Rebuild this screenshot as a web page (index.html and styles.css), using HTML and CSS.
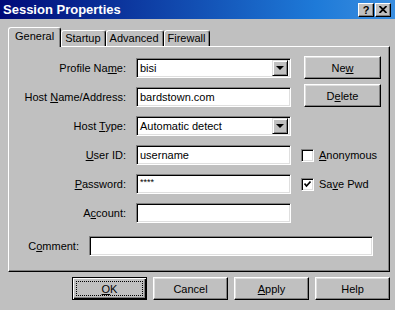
FILE: index.html
```html
<!DOCTYPE html>
<html lang="en">
<head>
  <meta charset="UTF-8" />
  <title>Session Properties</title>
  <link rel="stylesheet" href="styles.css">
</head>
<body>
  <div class="window">
    <div class="titlebar">
      <span class="title">Session Properties</span>
      <div class="caption-btns">
        <span class="cap-btn">?</span>
        <span class="cap-btn">
          <svg width="8" height="7" viewBox="0 0 8 7"><path d="M0.5 0 L7.5 7 M7.5 0 L0.5 7" stroke="#000" stroke-width="1.8"/></svg>
        </span>
      </div>
    </div>

    <div class="tabs">
      <div class="tab active">General</div>
      <div class="tab">Startup</div>
      <div class="tab">Advanced</div>
      <div class="tab">Firewall</div>
    </div>

    <div class="panel">
      <div class="top">
        <div class="fields">
          <label>Profile Na<u>m</u>e:</label>
          <div class="field select"><span>bisi</span><span class="drop"><i></i></span></div>

          <label>Host <u>N</u>ame/Address:</label>
          <div class="field">bardstown.com</div>

          <label>Host <u>T</u>ype:</label>
          <div class="field select"><span>Automatic detect</span><span class="drop"><i></i></span></div>

          <label><u>U</u>ser ID:</label>
          <div class="field">username</div>

          <label><u>P</u>assword:</label>
          <div class="field pwd">****</div>

          <label>A<u>c</u>count:</label>
          <div class="field"></div>
        </div>

        <div class="side">
          <button class="btn side-btn">Ne<u>w</u></button>
          <button class="btn side-btn gap">D<u>e</u>lete</button>
          <div class="check first"><span class="box"></span><span><u>A</u>nonymous</span></div>
          <div class="check"><span class="box"><svg width="7" height="7" viewBox="0 0 7 7"><path d="M0.5 2.5 L2.5 5 L6.5 0.5" fill="none" stroke="#000" stroke-width="1.6"/></svg></span><span>Sa<u>v</u>e Pwd</span></div>
        </div>
      </div>

      <div class="comment-row">
        <label>C<u>o</u>mment:</label>
        <div class="field wide"></div>
      </div>
    </div>

    <div class="actions">
      <button class="btn default"><span class="focus"><u>O</u>K</span></button>
      <button class="btn">Cancel</button>
      <button class="btn"><u>A</u>pply</button>
      <button class="btn">Help</button>
    </div>
  </div>
</body>
</html>
```

FILE: styles.css
```css
body {
  margin: 0;
  font-family: 'Liberation Sans', Arial, sans-serif;
  font-size: 11px;
  color: #000;
}

.window {
  width: 395px;
  height: 310px;
  background: #c0c0c0;
  overflow: hidden;
}

.titlebar {
  height: 19px;
  display: flex;
  align-items: center;
  justify-content: space-between;
  padding: 0 4px 0 3px;
  background: linear-gradient(to right, #000a78, #1e7ad8 80%, #3a8ee0);
}

.title {
  color: #fff;
  font-weight: bold;
  font-size: 13px;
}

.caption-btns {
  display: flex;
  gap: 1px;
}

.cap-btn {
  width: 16px;
  height: 14px;
  box-sizing: border-box;
  display: flex;
  align-items: center;
  justify-content: center;
  background: #c0c0c0;
  border-top: 1px solid #fff;
  border-left: 1px solid #fff;
  border-right: 1px solid #000;
  border-bottom: 1px solid #000;
  box-shadow: inset -1px -1px #808080;
  font-weight: bold;
  font-size: 11px;
}

.tabs {
  display: flex;
  align-items: flex-end;
  height: 19px;
  margin-top: 8px;
  padding-left: 8px;
}

.tab {
  height: 16px;
  box-sizing: border-box;
  padding: 1px 4px 0 3px;
  border-top: 1px solid #fff;
  border-left: 1px solid #fff;
  border-right: 1px solid #000;
  border-radius: 3px 3px 0 0;
  box-shadow: inset -1px 0 #808080;
  background: #c0c0c0;
}

.tab.active {
  height: 20px;
  margin-bottom: -1px;
  padding: 2px 6px 0 6px;
  position: relative;
  z-index: 1;
}

.panel {
  width: 382px;
  height: 226px;
  box-sizing: border-box;
  margin-left: 8px;
  border-top: 1px solid #fff;
  border-left: 1px solid #fff;
  border-right: 1px solid #000;
  border-bottom: 1px solid #000;
  box-shadow: inset -1px -1px #808080;
}

.top {
  display: flex;
}

.fields {
  display: grid;
  grid-template-columns: 117px 155px;
  grid-auto-rows: 20px;
  column-gap: 10px;
  row-gap: 9px;
  padding-top: 11px;
}

label {
  text-align: right;
  line-height: 20px;
}

.field {
  height: 20px;
  box-sizing: border-box;
  background: #fff;
  border-top: 1px solid #808080;
  border-left: 1px solid #808080;
  border-right: 1px solid #fff;
  border-bottom: 1px solid #fff;
  box-shadow: inset 1px 1px #000, inset -1px -1px #dfdfdf;
  padding: 0 3px;
  line-height: 18px;
  white-space: nowrap;
}

.field.pwd {
  font-size: 9px;
  line-height: 14px;
}

.select {
  display: flex;
  justify-content: space-between;
  padding-right: 2px;
}

.drop {
  width: 16px;
  height: 16px;
  margin-top: 1px;
  box-sizing: border-box;
  display: flex;
  align-items: center;
  justify-content: center;
  background: #c0c0c0;
  border-top: 1px solid #dfdfdf;
  border-left: 1px solid #dfdfdf;
  border-right: 1px solid #000;
  border-bottom: 1px solid #000;
  box-shadow: inset 1px 1px #fff, inset -1px -1px #808080;
}

.drop i {
  width: 0;
  height: 0;
  border-left: 4px solid transparent;
  border-right: 4px solid transparent;
  border-top: 4px solid #000;
}

.side {
  display: flex;
  flex-direction: column;
  margin-left: 10px;
  padding-top: 9px;
}

.btn {
  width: 75px;
  height: 23px;
  box-sizing: border-box;
  padding: 0;
  font-family: inherit;
  font-size: 11px;
  color: #000;
  background: #c0c0c0;
  border-top: 1px solid #fff;
  border-left: 1px solid #fff;
  border-right: 1px solid #000;
  border-bottom: 1px solid #000;
  box-shadow: inset -1px -1px #808080, inset 1px 1px #dfdfdf;
}

.side-btn {
  width: 77px;
  margin-left: 3px;
}

.side-btn.gap {
  margin-top: 5px;
}

.check {
  display: flex;
  align-items: center;
  gap: 5px;
  height: 20px;
  margin-top: 9px;
}

.check.first {
  margin-top: 38px;
}

.box {
  width: 13px;
  height: 13px;
  box-sizing: border-box;
  display: flex;
  align-items: center;
  justify-content: center;
  background: #fff;
  border-top: 1px solid #808080;
  border-left: 1px solid #808080;
  border-right: 1px solid #fff;
  border-bottom: 1px solid #fff;
  box-shadow: inset 1px 1px #000, inset -1px -1px #dfdfdf;
}

.comment-row {
  display: flex;
  gap: 10px;
  margin-top: 13px;
}

.comment-row label {
  width: 70px;
}

.field.wide {
  width: 284px;
}

.actions {
  display: flex;
  justify-content: flex-end;
  gap: 6px;
  padding-right: 5px;
  margin-top: 5px;
}

.btn.default {
  border: 1px solid #000;
  box-shadow: inset 1px 1px #fff, inset -1px -1px #000, inset -2px -2px #808080;
  padding: 3px;
}

.focus {
  display: flex;
  align-items: center;
  justify-content: center;
  height: 100%;
  box-sizing: border-box;
  border: 1px dotted #000;
}
```
